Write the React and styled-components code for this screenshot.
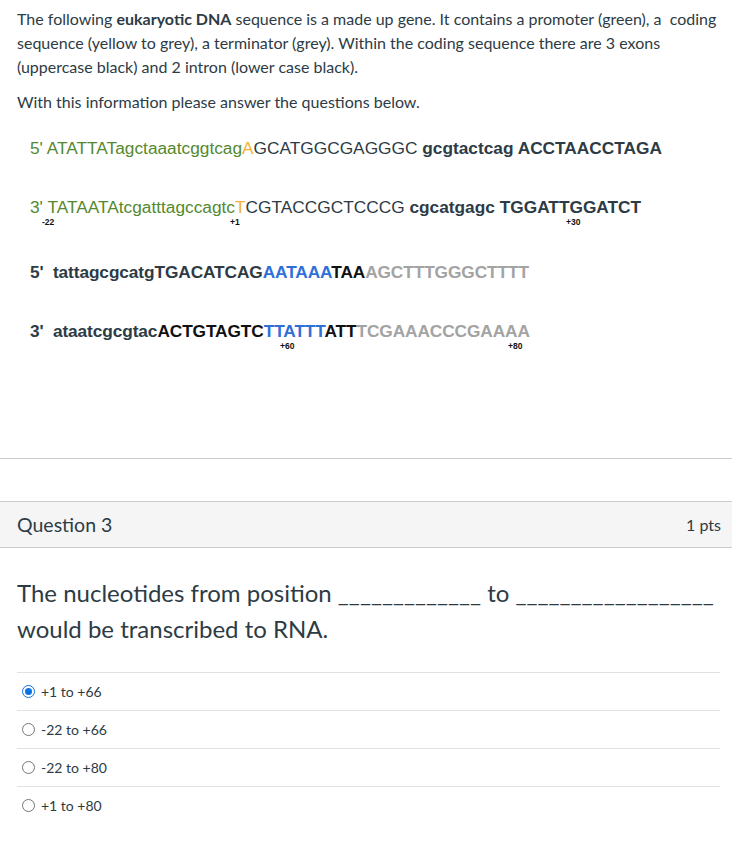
import styled, { createGlobalStyle } from 'styled-components';

const GlobalStyle = createGlobalStyle`
  body {
    margin: 0;
    background: #ffffff;
    font-family: Lato, "Open Sans", sans-serif;
    color: #2d3b45;
  }
`;

const Page = styled.div`
  width: 732px;
  padding-top: 7px;
`;

const Intro = styled.div`
  padding: 0 10px 0 17px;
`;

const Para = styled.p`
  margin: 0 0 11px;
  font-size: 16px;
  line-height: 24px;
`;

const Sequences = styled.div`
  padding: 13px 0 0 30px;
  font-family: Arial, "Liberation Sans", sans-serif;
  font-size: 17.3px;
`;

const Pair = styled.div`
  margin-bottom: 45px;
`;

const Strand = styled.div`
  position: relative;
  height: 20px;
  line-height: 20px;
  white-space: nowrap;
  letter-spacing: ${(p) => (p.$tight ? '-0.1px' : 'normal')};
  margin-bottom: ${(p) => p.$gap || 0}px;
`;

const Seg = styled.span`
  color: ${(p) => p.$color || '#2d3b45'};
  font-weight: ${(p) => (p.$bold ? 700 : 400)};
`;

const Marker = styled.span`
  position: absolute;
  top: 20px;
  font-size: 8.5px;
  font-weight: 700;
  color: #111;
  line-height: 10px;
  letter-spacing: normal;
`;

const Divider = styled.hr`
  margin: 117px 0 0;
  border: 0;
  border-top: 1px solid #c7cdd1;
`;

const QuestionHeader = styled.div`
  margin-top: 42px;
  height: 45px;
  display: flex;
  align-items: center;
  justify-content: space-between;
  padding: 0 11px 0 17px;
  background: #f5f5f5;
  border-top: 1px solid #c7cdd1;
  border-bottom: 1px solid #c7cdd1;
`;

const QTitle = styled.h2`
  margin: 0;
  font-size: 19.5px;
  font-weight: 400;
  color: #2d3b45;
`;

const Points = styled.span`
  font-size: 16px;
  font-weight: 400;
`;

const QuestionText = styled.div`
  padding: 27px 17px 0;
  font-size: 24px;
  line-height: 36px;
`;

const Answers = styled.div`
  margin: 25px 12px 0 17px;
`;

const Answer = styled.label`
  display: flex;
  align-items: center;
  gap: 6px;
  height: 37px;
  padding-left: 5px;
  border-top: 1px solid #dfe2e5;
  font-size: 14px;
  color: #2d3b45;
`;

const Radio = styled.span`
  width: 13px;
  height: 13px;
  border-radius: 50%;
  box-sizing: border-box;
  border: 1px solid ${(p) => (p.$checked ? '#0b74e5' : '#767676')};
  display: flex;
  align-items: center;
  justify-content: center;
  &::after {
    content: '';
    width: 7px;
    height: 7px;
    border-radius: 50%;
    background: ${(p) => (p.$checked ? '#0b74e5' : 'transparent')};
  }
`;

const GREEN = '#55892f';
const YELLOW = '#f0b232';
const BLUE = '#2f6fd8';
const LIGHT = '#a3a3a3';
const BLACK = '#111111';

const answers = [
  { text: '+1 to +66', checked: true },
  { text: '-22 to +66' },
  { text: '-22 to +80' },
  { text: '+1 to +80' },
];

export default function App() {
  return (
    <Page>
      <GlobalStyle />
      <Intro>
        <Para>
          The following <b>eukaryotic DNA</b> sequence is a made up gene. It contains a promoter (green), a&nbsp; coding
          sequence (yellow to grey), a terminator (grey). Within the coding sequence there are 3 exons (uppercase
          black) and 2 intron (lower case black).
        </Para>
        <Para>With this information please answer the questions below.</Para>
      </Intro>

      <Sequences>
        <Pair>
          <Strand $gap={39}>
            <Seg $color={GREEN}>5' ATATTATagctaaatcggtcag</Seg>
            <Seg $color={YELLOW}>A</Seg>
            <Seg>GCATGGCGAGGGC </Seg>
            <Seg $bold>gcgtactcag ACCTAACCTAGA</Seg>
          </Strand>
          <Strand>
            <Seg $color={GREEN}>3' TATAATAtcgatttagccagtc</Seg>
            <Seg $color={YELLOW}>T</Seg>
            <Seg>CGTACCGCTCCCG </Seg>
            <Seg $bold>cgcatgagc TGGATTGGATCT</Seg>
            <Marker style={{ left: 12 }}>-22</Marker>
            <Marker style={{ left: 200 }}>+1</Marker>
            <Marker style={{ left: 536 }}>+30</Marker>
          </Strand>
        </Pair>
        <Pair>
          <Strand $gap={39} $tight>
            <Seg $bold>5'&nbsp; tattagcgcatgTGACATCAG</Seg>
            <Seg $bold $color={BLUE}>AATAAA</Seg>
            <Seg $bold $color={BLACK}>TAA</Seg>
            <Seg $bold $color={LIGHT}>AGCTTTGGGCTTTT</Seg>
          </Strand>
          <Strand $tight>
            <Seg $bold>3'&nbsp; ataatcgcgtac</Seg>
            <Seg $bold $color={BLACK}>ACTGTAGTC</Seg>
            <Seg $bold $color={BLUE}>TTATTT</Seg>
            <Seg $bold $color={BLACK}>ATT</Seg>
            <Seg $bold $color={LIGHT}>TCGAAACCCGAAAA</Seg>
            <Marker style={{ left: 250 }}>+60</Marker>
            <Marker style={{ left: 478 }}>+80</Marker>
          </Strand>
        </Pair>
      </Sequences>

      <Divider />

      <QuestionHeader>
        <QTitle>Question 3</QTitle>
        <Points>1 pts</Points>
      </QuestionHeader>

      <QuestionText>
        The nucleotides from position _____________ to __________________ would be transcribed to RNA.
      </QuestionText>

      <Answers>
        {answers.map((a) => (
          <Answer key={a.text}>
            <Radio $checked={a.checked} />
            {a.text}
          </Answer>
        ))}
      </Answers>
    </Page>
  );
}
